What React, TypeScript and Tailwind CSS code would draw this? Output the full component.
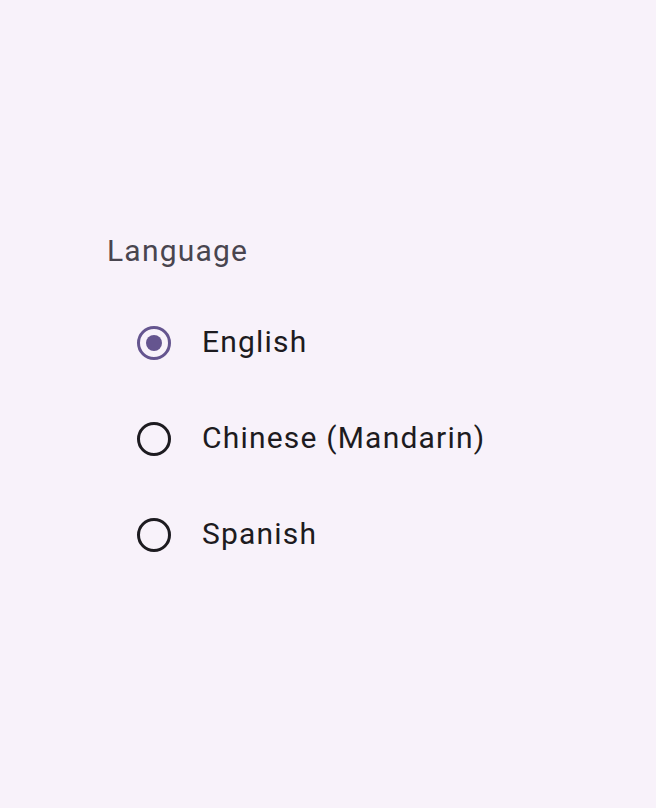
import { useState } from "react";

const languages = ["English", "Chinese (Mandarin)", "Spanish"];

export default function App() {
  const [selected, setSelected] = useState("English");

  return (
    <div className="min-h-screen w-full bg-[#f8f2fa] pl-[107px] pt-[230px] font-['Roboto',sans-serif]">
      <fieldset>
        <legend className="text-[30px] leading-[42px] tracking-[1.2px] text-[#49454f]">
          Language
        </legend>
        <div className="mt-[23px] flex flex-col pl-[30px]">
          {languages.map((lang) => {
            const active = selected === lang;
            return (
              <label
                key={lang}
                className="flex h-[96px] cursor-pointer items-center gap-[31px]"
              >
                <input
                  type="radio"
                  name="language"
                  value={lang}
                  checked={active}
                  onChange={() => setSelected(lang)}
                  className="sr-only"
                />
                <span
                  className={
                    active
                      ? "flex h-[34px] w-[34px] items-center justify-center rounded-full border-[3px] border-[#65558f]"
                      : "flex h-[34px] w-[34px] items-center justify-center rounded-full border-[3px] border-[#1d1b20]"
                  }
                >
                  {active && (
                    <span className="h-[16px] w-[16px] rounded-full bg-[#65558f]" />
                  )}
                </span>
                <span className="pb-[4px] text-[30px] tracking-[1.2px] text-[#1d1b20]">
                  {lang}
                </span>
              </label>
            );
          })}
        </div>
      </fieldset>
    </div>
  );
}
